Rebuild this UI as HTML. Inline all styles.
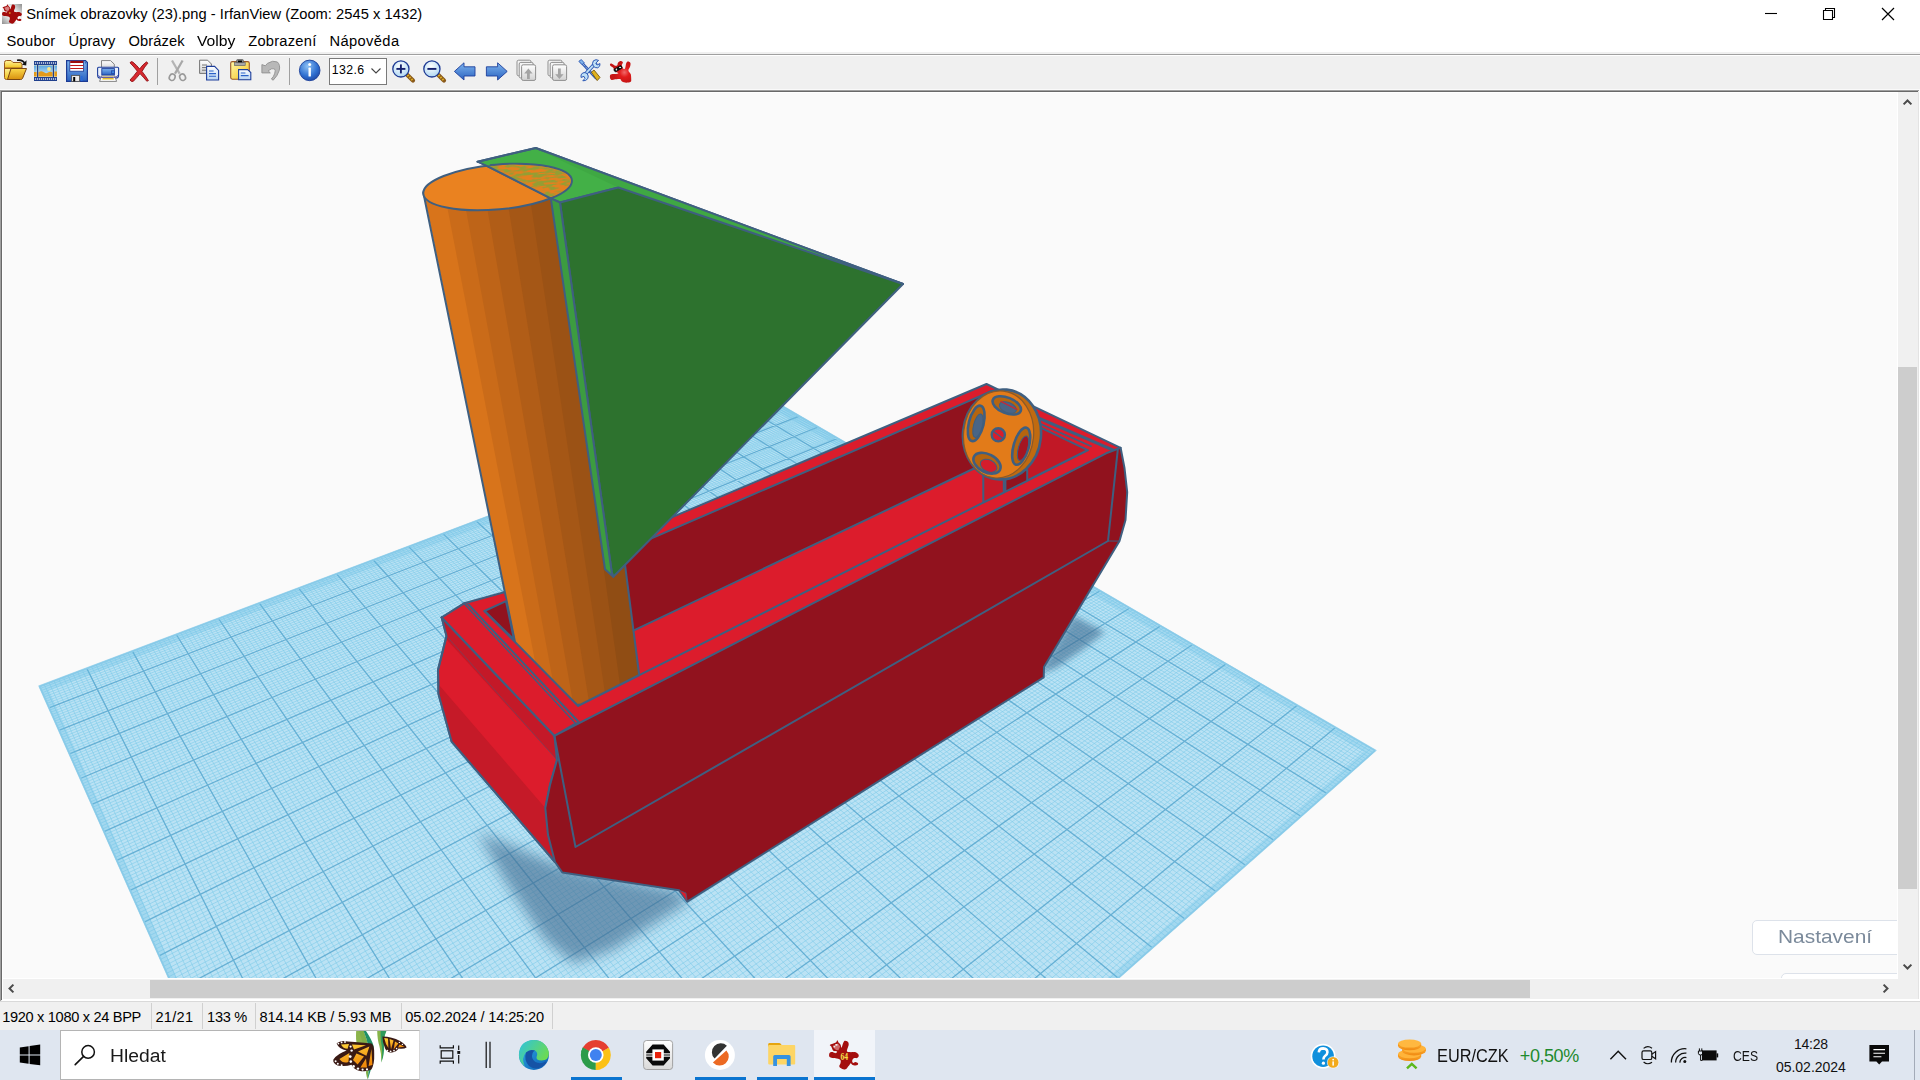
<!DOCTYPE html>
<html lang="cs"><head><meta charset="utf-8"><title>IrfanView</title>
<style>
*{box-sizing:border-box;margin:0;padding:0}
html,body{width:1920px;height:1080px;overflow:hidden;background:#fff}
body{position:relative;font-family:"Liberation Sans",sans-serif;color:#000}
.abs{position:absolute}
.t{position:absolute;white-space:nowrap;line-height:1;transform-origin:0 0}
#titlebar{left:0;top:0;width:1920px;height:31px;background:#fff}
#menubar{left:0;top:31px;width:1920px;height:22px;background:#fff}
#toolbar{left:0;top:52px;width:1920px;height:40px;background:#f0f0f0}
#view{left:0;top:90px;width:1920px;height:911px;background:#f0f0f0}
#canvas{left:3px;top:93px;width:1894px;height:885px;background:#fafafa;overflow:hidden}
#status{left:0;top:1002px;width:1920px;height:28px;background:#f0f0f0}
#taskbar{left:0;top:1030px;width:1920px;height:50px;background:#dfe6f0}
.sep{position:absolute;top:1003px;width:1px;height:26px;background:#d0d0d0}
.ul{position:absolute;top:1077px;height:3px;background:#0a74d0}
</style></head><body>

<div id="titlebar" class="abs">
<svg class="abs" style="left:2px;top:4px" width="20" height="20" viewBox="0 0 20 20">
<defs><linearGradient id="tig" x1="1" y1="0" x2="0" y2="1"><stop offset="0" stop-color="#8e8e8e"/><stop offset="0.42" stop-color="#ffffff"/><stop offset="0.58" stop-color="#ffffff"/><stop offset="1" stop-color="#8e8e8e"/></linearGradient></defs>
<rect x="0" y="0" width="20" height="20" fill="url(#tig)"/>
<g transform="scale(0.667) translate(-829,-1040)"><path d="M830.0 1044.7C830.8 1044.1 834.7 1043.3 835.9 1042.5C837.1 1041.8 836.8 1040.3 837.2 1040.3C837.7 1040.3 838.0 1041.8 838.5 1042.5C839.1 1043.3 840.1 1043.9 840.6 1044.7C841.0 1045.6 841.1 1047.9 841.5 1047.7C841.9 1047.5 842.5 1044.7 843.0 1043.6C843.4 1042.5 843.6 1041.7 844.1 1041.2C844.6 1040.8 845.2 1040.7 845.9 1040.9C846.6 1041.0 847.7 1041.3 848.1 1042.0C848.6 1042.6 848.8 1043.6 848.7 1044.7C848.6 1045.9 847.7 1047.7 847.4 1048.8C847.1 1049.9 846.7 1050.9 847.0 1051.4C847.4 1052.0 848.6 1052.0 849.6 1052.1C850.7 1052.3 852.3 1052.1 853.3 1052.1C854.3 1052.2 854.8 1052.0 855.6 1052.3C856.4 1052.6 857.6 1053.4 858.1 1054.0C858.7 1054.6 858.9 1055.5 858.7 1056.2C858.5 1056.9 857.7 1057.8 857.0 1058.1C856.3 1058.4 855.2 1057.8 854.4 1058.1C853.7 1058.3 853.0 1059.0 852.6 1059.6C852.2 1060.1 852.1 1060.9 852.2 1061.4C852.3 1062.0 852.8 1062.8 853.3 1062.9C853.8 1063.0 854.6 1062.2 855.2 1062.1C855.8 1062.1 856.5 1062.3 857.0 1062.5C857.5 1062.8 858.1 1063.2 858.1 1063.6C858.2 1064.1 858.0 1064.8 857.4 1065.1C856.9 1065.4 855.7 1065.5 854.8 1065.5C854.0 1065.4 852.9 1065.1 852.2 1064.7C851.5 1064.4 851.2 1063.3 850.7 1063.3C850.3 1063.3 850.1 1064.2 849.6 1064.7C849.2 1065.3 848.6 1066.0 848.1 1066.6C847.7 1067.2 847.3 1068.0 846.7 1068.4C846.0 1068.9 845.1 1069.6 844.1 1069.6C843.1 1069.5 841.5 1068.6 840.7 1068.1C839.9 1067.5 839.3 1067.0 839.3 1066.2C839.2 1065.5 840.1 1064.6 840.4 1063.6C840.6 1062.7 840.9 1061.4 840.7 1060.7C840.6 1059.9 839.9 1059.6 839.3 1059.2C838.6 1058.8 837.8 1058.6 836.7 1058.4C835.5 1058.3 833.4 1058.3 832.2 1058.1C831.0 1057.8 830.2 1057.5 829.6 1057.0C829.1 1056.4 829.0 1055.5 829.1 1054.7C829.1 1054.0 829.4 1053.0 830.0 1052.5C830.6 1052.1 831.6 1052.1 832.6 1052.1C833.6 1052.2 835.2 1053.0 835.9 1052.9C836.7 1052.8 837.5 1051.8 837.0 1051.4C836.6 1051.0 834.2 1051.2 833.3 1050.7C832.5 1050.1 832.2 1048.8 831.9 1048.1C831.5 1047.3 831.4 1046.8 831.1 1046.2C830.8 1045.7 829.2 1045.4 830.0 1044.7Z" fill="#a30b0b"/><path d="M832.6 1045.6L838 1043.4L840.4 1046.6L838.4 1050.4Q834 1050.4 832.6 1045.6Z" fill="#d98080"/><rect x="839.4" y="1052.6" width="2.4" height="1.8" fill="#f2c030"/></g></svg>
<div class="t" style="left:26.2px;top:7.4px;font-size:14.7px;color:#000;letter-spacing:0.036px;">Snímek obrazovky (23).png - IrfanView (Zoom: 2545 x 1432)</div>
<svg class="abs" style="left:1740px;top:0" width="180" height="31" viewBox="1740 0 180 31" fill="none" stroke="#000" stroke-width="1.1">
<path d="M1765 13.5H1777"/>
<path d="M1823.5 10.5h9v9h-9z M1825.5 10.5v-2h9v9h-2"/>
<path d="M1882 8L1894 20M1894 8L1882 20" stroke-width="1.2"/></svg>
</div>
<div id="menubar" class="abs">
<div class="t" style="left:6.5px;top:2.9px;font-size:14.7px;color:#000;letter-spacing:0.280px;">Soubor</div>
<div class="t" style="left:68.5px;top:2.9px;font-size:14.7px;color:#000;letter-spacing:0.068px;">Úpravy</div>
<div class="t" style="left:128.6px;top:2.9px;font-size:14.7px;color:#000;letter-spacing:0.091px;">Obrázek</div>
<div class="t" style="left:197.2px;top:2.9px;font-size:14.7px;color:#000;transform:scaleX(1.0706);">Volby</div>
<div class="t" style="left:248.2px;top:2.9px;font-size:14.7px;color:#000;letter-spacing:0.239px;">Zobrazení</div>
<div class="t" style="left:329.5px;top:2.9px;font-size:14.7px;color:#000;letter-spacing:0.369px;">Nápověda</div>
</div>
<div id="toolbar" class="abs">
<div class="abs" style="left:0;top:2px;width:1920px;height:1px;background:#a0a0a0"></div>
<div class="abs" style="left:0;top:3px;width:1920px;height:1px;background:#fff"></div>
<div class="abs" style="left:157px;top:6px;width:1px;height:27px;background:#a0a0a0"></div>
<div class="abs" style="left:289px;top:6px;width:1px;height:27px;background:#a0a0a0"></div>
<svg class="abs" style="left:0;top:0" width="700" height="40" viewBox="0 52 700 40">
<defs>
<linearGradient id="gfold" x1="0" y1="0" x2="0" y2="1"><stop offset="0" stop-color="#fff6a0"/><stop offset="1" stop-color="#f2c21c"/></linearGradient>
<linearGradient id="gfold2" x1="0" y1="0" x2="0" y2="1"><stop offset="0" stop-color="#fbd84a"/><stop offset="1" stop-color="#d8900e"/></linearGradient>
<linearGradient id="gblue" x1="0" y1="0" x2="0" y2="1"><stop offset="0" stop-color="#7db4ee"/><stop offset="1" stop-color="#2a62c0"/></linearGradient>
<linearGradient id="gsky" x1="0" y1="0" x2="0" y2="1"><stop offset="0" stop-color="#5aa6e0"/><stop offset="1" stop-color="#cfeaf8"/></linearGradient>
<radialGradient id="ginfo" cx="0.4" cy="0.3" r="0.8"><stop offset="0" stop-color="#8cc0f4"/><stop offset="0.6" stop-color="#2f6fd0"/><stop offset="1" stop-color="#1b3f9a"/></radialGradient>
<radialGradient id="glens" cx="0.45" cy="0.35" r="0.7"><stop offset="0" stop-color="#ffffff"/><stop offset="1" stop-color="#a9d4f2"/></radialGradient>
<linearGradient id="gpaper" x1="0" y1="0" x2="0" y2="1"><stop offset="0" stop-color="#ffffff"/><stop offset="1" stop-color="#d2d2d2"/></linearGradient>
<linearGradient id="gclip" x1="0" y1="0" x2="1" y2="1"><stop offset="0" stop-color="#fff9a8"/><stop offset="1" stop-color="#f5c022"/></linearGradient>
<linearGradient id="gpage" x1="0" y1="0" x2="0" y2="1"><stop offset="0" stop-color="#ffffff"/><stop offset="1" stop-color="#b8d4f2"/></linearGradient>
</defs>
<g transform="translate(3,59)">
<path d="M1.5 3.5Q1.5 1.5 3.5 1.5H8L10 3.5H17Q19 3.5 19 5.5V9H1.5Z" fill="url(#gfold)" stroke="#9a5a1c" stroke-width="1"/>
<path d="M1.5 8V18.5Q1.5 20.5 3.5 20.5H6L9 9.5H1.5Z" fill="url(#gfold)" stroke="#9a5a1c" stroke-width="1"/>
<path d="M8 9.5H23.5L19.5 19.5Q19 20.5 17.5 20.5H4.5Z" fill="url(#gfold2)" stroke="#7a4612" stroke-width="1"/>
<path d="M14 1.2Q20 0.5 21.5 4.2" fill="none" stroke="#111" stroke-width="1.6"/><path d="M19 5.8L23.6 1.2L23.2 6.6Z" fill="#111"/></g>
<g transform="translate(34,61)">
<rect x="0" y="0" width="23" height="20" fill="#1f3f8c"/>
<rect x="0" y="4" width="23" height="12" fill="#f5e6b8"/>
<rect x="0" y="4.5" width="2.6" height="11" fill="url(#gsky)"/><rect x="0" y="11" width="2.6" height="4.5" fill="#e39a1a"/>
<rect x="4.4" y="4.5" width="14.2" height="11" fill="url(#gsky)"/>
<path d="M4.4 11.5Q7 9.5 9.5 11Q12 13 14 11.5Q16.5 10 18.6 11.5V15.5H4.4Z" fill="#e39a1a"/><circle cx="15" cy="8" r="1.9" fill="#fbe88a"/>
<rect x="20.4" y="4.5" width="2.6" height="11" fill="url(#gsky)"/><rect x="20.4" y="10.5" width="2.6" height="5" fill="#e39a1a"/>
<rect x="3" y="4" width="1.2" height="12" fill="#1f3f8c"/><rect x="18.8" y="4" width="1.2" height="12" fill="#1f3f8c"/>
<g fill="#fff"><circle cx="1.5" cy="2" r="0.7"/><circle cx="3.5" cy="2" r="0.7"/><circle cx="5.5" cy="2" r="0.7"/><circle cx="7.5" cy="2" r="0.7"/><circle cx="9.5" cy="2" r="0.7"/><circle cx="11.5" cy="2" r="0.7"/><circle cx="13.5" cy="2" r="0.7"/><circle cx="15.5" cy="2" r="0.7"/><circle cx="17.5" cy="2" r="0.7"/><circle cx="19.5" cy="2" r="0.7"/><circle cx="21.5" cy="2" r="0.7"/>
<circle cx="1.5" cy="18" r="0.7"/><circle cx="3.5" cy="18" r="0.7"/><circle cx="5.5" cy="18" r="0.7"/><circle cx="7.5" cy="18" r="0.7"/><circle cx="9.5" cy="18" r="0.7"/><circle cx="11.5" cy="18" r="0.7"/><circle cx="13.5" cy="18" r="0.7"/><circle cx="15.5" cy="18" r="0.7"/><circle cx="17.5" cy="18" r="0.7"/><circle cx="19.5" cy="18" r="0.7"/><circle cx="21.5" cy="18" r="0.7"/></g></g>
<g transform="translate(66,60)">
<path d="M0.6 0.6H19.5L21.4 2.5V21.4H0.6Z" fill="url(#gblue)" stroke="#1b3a94" stroke-width="1.2"/>
<rect x="3.8" y="0.6" width="13.8" height="10.6" fill="#fff" stroke="#1b3a94" stroke-width="0.8"/>
<rect x="4.2" y="0.8" width="13" height="2.2" fill="#9c0c0c"/><rect x="4.2" y="5" width="13" height="1" fill="#c01818"/><rect x="4.2" y="8" width="13" height="1" fill="#c01818"/>
<rect x="5.6" y="15.4" width="8" height="6" fill="#ececec" stroke="#555" stroke-width="0.9"/><rect x="7.2" y="17" width="2" height="4.4" fill="#000"/>
<rect x="14.8" y="16" width="1.8" height="5" fill="#2a6ad8"/><circle cx="19.4" cy="2.8" r="0.6" fill="#1b3a94"/></g>
<g transform="translate(97,60)">
<path d="M4.5 0.6H13.5L17.3 4.2V9H4.5Z" fill="url(#gpaper)" stroke="#777" stroke-width="0.9"/>
<path d="M0.6 8.2Q0.6 7.2 1.6 7.2H20.6Q21.6 7.2 21.6 8.2V15.2Q21.6 18.2 18.6 18.2H3.6Q0.6 18.2 0.6 15.2Z" fill="#eaf1fb" stroke="#1e3f9c" stroke-width="1.1"/>
<rect x="4.8" y="8.6" width="12.6" height="6.4" fill="url(#gblue)" stroke="#1e3f9c" stroke-width="0.9"/>
<rect x="14.6" y="10.8" width="2.8" height="2.8" fill="#3d86e0" stroke="#1e3f9c" stroke-width="0.7"/>
<path d="M4.4 16H17.8L19.6 21.4H2.6Z" fill="#fff" stroke="#777" stroke-width="0.9"/>
<path d="M6.2 16.8H16L17 19.6H5.2Z" fill="#f2c81e"/>
<path d="M1.4 15.4Q3 17.6 6 17.6H16.4Q19.4 17.6 21 15.4" fill="none" stroke="#5a54b0" stroke-width="1"/></g>
<g transform="translate(128,60)">
<path d="M2 2.8Q3.4 0.8 5 2.2Q9 5.4 11.6 9Q14.6 4.6 18.6 1.8L19.8 3.2Q16.4 7 14 11.4Q17.4 15.6 20.4 20.6L18.8 21.2Q15.2 17 12 13.6Q9 17.6 5.2 21.4Q3 22 2 20Q6.4 15.4 9.4 11.2Q6.2 7 2 2.8Z" fill="#d8282e" stroke="#8e1014" stroke-width="0.9" stroke-linejoin="round"/></g>
<g transform="translate(167,59)" fill="none" stroke="#9a9a9a">
<path d="M5 1.5L12.6 14.6" stroke-width="2.2" stroke="#b4b4b4"/><path d="M15.6 1.5L8 14.6" stroke-width="2.2" stroke="#a8a8a8"/>
<ellipse cx="5.2" cy="18.2" rx="2.8" ry="3.3" stroke-width="1.6" transform="rotate(28 5.2 18.2)"/>
<ellipse cx="15.6" cy="18.2" rx="2.8" ry="3.3" stroke-width="1.6" transform="rotate(-28 15.6 18.2)"/></g>
<g transform="translate(199,59)">
<path d="M0.6 1.2H8.6L12.4 5V14.4H0.6Z" fill="url(#gpaper)" stroke="#666" stroke-width="0.9"/>
<path d="M3 6H8M3 8.6H8M3 11.2H7" stroke="#666" stroke-width="0.9"/>
<path d="M7.6 7.4H15.6L19.6 11.4V21H7.6Z" fill="url(#gpage)" stroke="#1e3f9c" stroke-width="1.1"/>
<path d="M10 12H14.6M10 14.6H17M10 17.2H17" stroke="#2a62c8" stroke-width="1.1"/></g>
<g transform="translate(230,59)">
<rect x="0.7" y="2.6" width="18.6" height="17.6" rx="1.6" fill="url(#gclip)" stroke="#9a5a2a" stroke-width="1.1"/>
<rect x="4.6" y="3.6" width="10.6" height="3" fill="#a8a8a8" stroke="#666" stroke-width="0.7"/>
<path d="M6.6 3.6V1.4Q6.6 0.6 7.6 0.6H12.4Q13.4 0.6 13.4 1.4V3.6Z" fill="#8a8a8a" stroke="#555" stroke-width="0.7"/><rect x="8" y="1.6" width="4" height="1.6" fill="#000"/>
<path d="M8.6 10.6H17.6L20.8 13.6V20.8H8.6Z" fill="url(#gpage)" stroke="#1e3f9c" stroke-width="1.1"/>
<path d="M10.8 14H15.4M10.8 16.6H18.6" stroke="#2a62c8" stroke-width="1.1"/></g>
<g transform="translate(261,59)">
<path d="M0.9 5.6L0.9 13.9L9.3 13.9L7.2 11.8Q10.8 8.8 13.4 9.8Q15 11.2 13.6 14.8Q12.6 17.8 10.4 20L12.2 21.2Q16.6 16.8 18.2 11.6Q19.6 6 16.4 3Q12 0.8 6.4 4.4L4.4 6.8Z" fill="#b8b8b8" stroke="#909090" stroke-width="0.9" stroke-linejoin="round"/></g>
<g transform="translate(299,59)">
<circle cx="10.7" cy="11.4" r="10.3" fill="url(#ginfo)" stroke="#1b3f9a" stroke-width="0.9"/>
<circle cx="10.7" cy="5.6" r="1.5" fill="#fff"/><rect x="9.5" y="8.6" width="2.4" height="9" rx="0.6" fill="#fff"/></g>
<g transform="translate(392,59)">
<path d="M14.6 15.2L21 21.6" stroke="#8a5a1c" stroke-width="4.2" stroke-linecap="round"/><path d="M15.4 16L20.6 21.2" stroke="#e0b020" stroke-width="2" stroke-dasharray="1.6 1.2"/>
<circle cx="8.9" cy="9.9" r="8.1" fill="url(#glens)" stroke="#1e3a94" stroke-width="1.3"/><path d="M4.4 9.9H13.4" stroke="#14206e" stroke-width="1.9"/><path d="M8.9 5.4V14.4" stroke="#14206e" stroke-width="1.9"/></g>
<g transform="translate(423,59)">
<path d="M14.6 15.2L21 21.6" stroke="#8a5a1c" stroke-width="4.2" stroke-linecap="round"/><path d="M15.4 16L20.6 21.2" stroke="#e0b020" stroke-width="2" stroke-dasharray="1.6 1.2"/>
<circle cx="8.9" cy="9.9" r="8.1" fill="url(#glens)" stroke="#1e3a94" stroke-width="1.3"/><path d="M4.4 9.9H13.4" stroke="#14206e" stroke-width="1.9"/></g>
<g transform="translate(454,59)"><path d="M0.4 12.4L10 3.8V7.8H21V17H10V21Z" fill="url(#gblue)" stroke="#1e3f9c" stroke-width="0.9" stroke-linejoin="round"/></g>
<g transform="translate(485,59)"><path d="M22.2 12.4L12.6 3.8V7.8H1.4V17H12.6V21Z" fill="url(#gblue)" stroke="#1e3f9c" stroke-width="0.9" stroke-linejoin="round"/></g>
<g transform="translate(516,59)">
<rect x="1" y="1.2" width="14" height="15.6" rx="1.6" fill="#f4f4f4" stroke="#8e8e8e" stroke-width="1"/>
<rect x="3.2" y="3.4" width="14" height="15.6" rx="1.6" fill="#f4f4f4" stroke="#8e8e8e" stroke-width="1"/>
<rect x="5.6" y="5.8" width="14" height="15.6" rx="1.6" fill="url(#gpaper)" stroke="#8e8e8e" stroke-width="1"/>
<path d="M12.4 9.6L16.6 14.4H13.8V20H11V14.4H8.2Z" fill="#a4a4a4"/></g>
<g transform="translate(547,59)">
<rect x="1" y="1.2" width="14" height="15.6" rx="1.6" fill="#f4f4f4" stroke="#8e8e8e" stroke-width="1"/>
<rect x="3.2" y="3.4" width="14" height="15.6" rx="1.6" fill="#f4f4f4" stroke="#8e8e8e" stroke-width="1"/>
<rect x="5.6" y="5.8" width="14" height="15.6" rx="1.6" fill="url(#gpaper)" stroke="#8e8e8e" stroke-width="1"/>
<path d="M12.4 20L16.6 15.2H13.8V9.6H11V15.2H8.2Z" fill="#a4a4a4"/></g>
<g transform="translate(578,59)">
<path d="M2.2 2L18.4 19.6" stroke="#2c58b4" stroke-width="2.6"/><path d="M2.2 2L18.4 19.6" stroke="#dbeaf8" stroke-width="1" stroke-dasharray="1 1"/>
<path d="M0.8 2.2L3.4 0.6L6.4 4L4 5.6Z" fill="#7fb2ea" stroke="#2c58b4" stroke-width="0.8"/>
<path d="M13.4 13.2L16 11L22 18.4L19.2 21.6Z" fill="#e0b21e" stroke="#7a5a10" stroke-width="0.9"/>
<path d="M18.2 3.2L7 15.4" stroke="#2c58b4" stroke-width="3.6"/><path d="M18.2 3.2L7 15.4" stroke="#bfe0f6" stroke-width="1.8"/>
<path d="M15.4 1.8Q18 -0.2 20.6 1.4L17.8 4L19 6L22 4.6Q22.4 7.6 19.8 8.8Q17 9.2 15.2 7Q13.8 4.4 15.4 1.8Z" fill="#bfe0f6" stroke="#2c58b4" stroke-width="1"/>
<path d="M9.2 14.6Q11 17 9.8 19.6Q8 22.2 4.8 21.8L7 19.4L6 17.4L3 18.4Q2.4 15.6 4.6 14Q7 12.8 9.2 14.6Z" fill="#bfe0f6" stroke="#2c58b4" stroke-width="1"/></g>
<g transform="translate(609,59)">
<defs><radialGradient id="gcat" cx="0.68" cy="0.52" r="0.5"><stop offset="0" stop-color="#f06a6a"/><stop offset="0.45" stop-color="#e21c1c"/><stop offset="1" stop-color="#c41414"/></radialGradient></defs>
<path d="M1.0 5.3C1.2 5.0 1.6 4.3 2.5 4.5C3.4 4.7 5.1 6.4 6.1 6.7C7.1 7.0 7.9 6.6 8.3 6.2C8.8 5.7 8.4 4.6 8.9 3.9C9.4 3.3 10.6 2.2 11.4 2.1C12.2 2.0 13.7 2.7 13.9 3.4C14.1 4.1 12.7 5.1 12.8 6.2C12.9 7.2 13.9 9.3 14.4 9.8C15.0 10.3 15.6 10.1 16.1 9.2C16.6 8.3 16.8 5.3 17.2 4.2C17.7 3.1 18.2 2.6 18.9 2.6C19.6 2.5 21.0 3.1 21.4 3.9C21.8 4.8 21.4 6.3 21.1 7.6C20.8 8.8 19.4 10.2 19.4 11.4C19.5 12.7 21.2 13.7 21.7 15.1C22.1 16.4 22.2 18.5 22.2 19.8C22.2 21.1 22.5 22.2 21.7 22.8C20.8 23.5 18.7 23.7 17.2 23.7C15.8 23.6 14.1 23.2 13.1 22.6C12.0 22.0 12.3 20.4 11.1 20.1C10.0 19.7 7.5 20.2 6.1 20.3C4.7 20.5 3.4 21.2 2.5 20.9C1.6 20.6 1.1 19.5 1.0 18.7C0.8 17.8 0.8 16.2 1.7 15.6C2.5 15.0 4.8 15.3 6.1 15.1C7.4 14.8 9.4 14.6 9.4 14.2C9.5 13.9 7.4 13.4 6.7 12.8C5.9 12.3 5.4 11.6 5.0 10.9C4.6 10.2 4.8 9.4 4.2 8.7C3.6 8.0 1.9 7.3 1.4 6.7C0.9 6.2 0.8 5.7 1.0 5.3Z" fill="url(#gcat)"/>
<path d="M5 10.3L11.7 6.4L13.1 8.1L12.8 9.2L6.7 12.8L5.3 12Z" fill="#0c0c0c" stroke="#0c0c0c" stroke-width="0.8" stroke-linejoin="round"/>
<ellipse cx="7.4" cy="10.6" rx="0.8" ry="1" fill="#e8e8e8"/><ellipse cx="11.1" cy="8.4" rx="1.1" ry="0.7" fill="#e8e8e8"/></g>
</svg>
<div class="abs" style="left:329px;top:6px;width:58px;height:27px;background:#fff;border:1px solid #7a7a7a"></div>
<div class="t" style="left:331.7px;top:11.6px;font-size:12.3px;color:#000;letter-spacing:0.405px;">132.6</div>
<svg class="abs" style="left:370px;top:14px" width="12" height="10" viewBox="0 0 12 10"><path d="M1.5 2.5L6 7L10.5 2.5" fill="none" stroke="#444" stroke-width="1.1"/></svg>
</div>
<div id="view" class="abs"></div>
<div class="abs" style="left:0;top:89px;width:1920px;height:1px;background:#fafafa"></div>
<div class="abs" style="left:0;top:90px;width:1919px;height:1px;background:#a0a0a0"></div>
<div class="abs" style="left:1px;top:91px;width:1917px;height:1px;background:#696969"></div>
<div class="abs" style="left:2px;top:92px;width:1896px;height:1px;background:#fff"></div>
<div class="abs" style="left:0;top:90px;width:1px;height:911px;background:#a0a0a0"></div>
<div class="abs" style="left:1px;top:91px;width:1px;height:909px;background:#696969"></div>
<div class="abs" style="left:2px;top:92px;width:1px;height:907px;background:#fff"></div>
<div class="abs" style="left:1897px;top:92px;width:1px;height:887px;background:#fff"></div>
<div class="abs" style="left:1918px;top:92px;width:1px;height:908px;background:#e3e3e3"></div>
<div class="abs" style="left:1919px;top:90px;width:1px;height:911px;background:#fff"></div>
<div class="abs" style="left:2px;top:978px;width:1896px;height:1px;background:#fff"></div>
<div class="abs" style="left:2px;top:999px;width:1917px;height:2px;background:#fff"></div>
<div class="abs" style="left:0;top:1001px;width:1920px;height:1px;background:#d9d9d9"></div>
<div id="canvas" class="abs">
<svg class="abs" style="left:0;top:0" width="1894" height="885" viewBox="3 93 1894 885">
<defs>
<filter id="blur7" x="-20%" y="-20%" width="140%" height="140%"><feGaussianBlur stdDeviation="7"/></filter>
<filter id="blur4" x="-30%" y="-30%" width="160%" height="160%"><feGaussianBlur stdDeviation="3"/></filter>
<filter id="zf" x="0" y="0" width="100%" height="100%" color-interpolation-filters="sRGB"><feTurbulence type="fractalNoise" baseFrequency="0.09 0.42" numOctaves="2" seed="7" result="n"/><feColorMatrix in="n" type="matrix" values="0 0 0 0 0.58  0 0 0 0 0.62  0 0 0 0 0.2  0 0 0 7 -3.1" result="c"/><feComposite in="c" in2="SourceGraphic" operator="in"/></filter>
</defs>
<polygon points="39.5,686.3 781.3,405.6 1375.2,750.5 436.7,1581.2" fill="#bbe2f4"/>
<path d="M44.3 684.5L444.5 1574.3M40.4 688.4L783.0 406.6M49.1 682.7L452.2 1567.4M41.4 690.5L784.8 407.7M53.9 680.9L459.9 1560.7M42.3 692.7L786.6 408.7M58.7 679.1L467.5 1553.9M43.3 694.8L788.5 409.8M63.4 677.3L475.1 1547.2M44.2 696.9L790.3 410.8M68.1 675.5L482.6 1540.6M45.2 699.1L792.1 411.9M72.8 673.7L490.1 1534.0M46.1 701.3L793.9 413.0M77.5 671.9L497.5 1527.4M47.1 703.4L795.7 414.0M82.2 670.1L504.8 1520.9M48.1 705.6L797.6 415.1M91.5 666.6L519.3 1508.0M50.0 710.0L801.3 417.2M96.1 664.9L526.5 1501.7M51.0 712.2L803.1 418.3M100.7 663.1L533.7 1495.4M52.0 714.5L805.0 419.4M105.3 661.4L540.8 1489.1M53.0 716.7L806.8 420.5M109.8 659.7L547.8 1482.9M54.0 718.9L808.7 421.6M114.4 658.0L554.8 1476.7M55.0 721.2L810.6 422.6M118.9 656.2L561.7 1470.6M56.0 723.4L812.5 423.7M123.4 654.5L568.6 1464.5M57.0 725.7L814.4 424.8M127.9 652.8L575.4 1458.4M58.0 728.0L816.3 425.9M136.9 649.5L588.9 1446.5M60.1 732.6L820.1 428.1M141.3 647.8L595.6 1440.5M61.1 734.9L822.0 429.3M145.7 646.1L602.3 1434.6M62.1 737.3L823.9 430.4M150.1 644.4L608.9 1428.8M63.2 739.6L825.8 431.5M154.5 642.8L615.4 1423.0M64.2 741.9L827.8 432.6M158.9 641.1L621.9 1417.2M65.2 744.3L829.7 433.7M163.3 639.5L628.4 1411.5M66.3 746.7L831.6 434.9M167.6 637.8L634.8 1405.8M67.4 749.1L833.6 436.0M171.9 636.2L641.2 1400.2M68.4 751.5L835.6 437.1M180.6 632.9L653.8 1389.0M70.6 756.3L839.5 439.4M184.8 631.3L660.0 1383.5M71.6 758.7L841.5 440.6M189.1 629.7L666.2 1378.0M72.7 761.1L843.4 441.7M193.4 628.1L672.4 1372.6M73.8 763.6L845.4 442.9M197.6 626.5L678.5 1367.1M74.9 766.1L847.4 444.0M201.8 624.9L684.6 1361.8M76.0 768.5L849.4 445.2M206.0 623.3L690.6 1356.4M77.1 771.0L851.4 446.4M210.2 621.7L696.6 1351.1M78.2 773.5L853.4 447.5M214.4 620.1L702.6 1345.8M79.3 776.0L855.5 448.7M222.7 617.0L714.4 1335.4M81.6 781.1L859.5 451.1M226.8 615.4L720.2 1330.2M82.7 783.6L861.6 452.2M230.9 613.9L726.0 1325.1M83.8 786.2L863.6 453.4M235.0 612.3L731.8 1320.0M85.0 788.8L865.7 454.6M239.1 610.8L737.5 1314.9M86.1 791.3L867.7 455.8M243.2 609.2L743.2 1309.9M87.3 793.9L869.8 457.0M247.2 607.7L748.9 1304.9M88.4 796.5L871.9 458.2M251.3 606.2L754.5 1299.9M89.6 799.2L874.0 459.4M255.3 604.6L760.1 1295.0M90.8 801.8L876.0 460.6M263.3 601.6L771.2 1285.2M93.1 807.1L880.2 463.1M267.3 600.1L776.6 1280.3M94.3 809.8L882.4 464.3M271.2 598.6L782.1 1275.5M95.5 812.5L884.5 465.5M275.2 597.1L787.5 1270.7M96.7 815.2L886.6 466.8M279.1 595.6L792.9 1266.0M97.9 817.9L888.7 468.0M283.1 594.1L798.2 1261.2M99.1 820.6L890.9 469.2M287.0 592.7L803.5 1256.5M100.3 823.4L893.0 470.5M290.9 591.2L808.8 1251.9M101.6 826.1L895.2 471.7M294.7 589.7L814.0 1247.2M102.8 828.9L897.3 473.0M302.5 586.8L824.4 1238.0M105.3 834.5L901.7 475.5M306.3 585.3L829.6 1233.5M106.5 837.3L903.8 476.8M310.1 583.9L834.7 1228.9M107.8 840.1L906.0 478.1M314.0 582.4L839.7 1224.4M109.0 842.9L908.2 479.3M317.8 581.0L844.8 1220.0M110.3 845.8L910.4 480.6M321.6 579.6L849.8 1215.5M111.6 848.7L912.6 481.9M325.3 578.1L854.8 1211.1M112.8 851.5L914.9 483.2M329.1 576.7L859.8 1206.7M114.1 854.4L917.1 484.5M332.9 575.3L864.7 1202.4M115.4 857.4L919.3 485.8M340.3 572.5L874.5 1193.7M118.0 863.2L923.8 488.4M344.0 571.1L879.3 1189.4M119.3 866.2L926.1 489.7M347.7 569.7L884.1 1185.2M120.7 869.2L928.3 491.0M351.4 568.3L888.9 1180.9M122.0 872.2L930.6 492.3M355.1 566.9L893.7 1176.7M123.3 875.2L932.9 493.6M358.7 565.5L898.4 1172.5M124.7 878.2L935.2 495.0M362.4 564.1L903.1 1168.4M126.0 881.2L937.5 496.3M366.0 562.7L907.8 1164.2M127.4 884.3L939.8 497.6M369.7 561.4L912.4 1160.1M128.7 887.3L942.1 499.0M376.9 558.6L921.6 1152.0M131.5 893.5L946.7 501.7M380.5 557.3L926.2 1147.9M132.9 896.7L949.1 503.0M384.0 555.9L930.7 1143.9M134.3 899.8L951.4 504.4M387.6 554.6L935.3 1139.9M135.7 902.9L953.8 505.8M391.2 553.2L939.7 1135.9M137.1 906.1L956.1 507.1M394.7 551.9L944.2 1132.0M138.5 909.3L958.5 508.5M398.2 550.6L948.6 1128.1M139.9 912.5L960.9 509.9M401.7 549.2L953.1 1124.2M141.3 915.7L963.3 511.3M405.2 547.9L957.4 1120.3M142.8 919.0L965.7 512.7M412.2 545.3L966.1 1112.6M145.7 925.5L970.5 515.5M415.7 543.9L970.5 1108.8M147.1 928.8L972.9 516.9M419.1 542.6L974.7 1105.0M148.6 932.1L975.3 518.3M422.6 541.3L979.0 1101.2M150.1 935.4L977.8 519.7M426.0 540.0L983.2 1097.4M151.6 938.8L980.2 521.1M429.4 538.7L987.5 1093.7M153.1 942.2L982.7 522.6M432.9 537.4L991.7 1090.0M154.6 945.5L985.1 524.0M436.3 536.2L995.8 1086.3M156.1 948.9L987.6 525.4M439.6 534.9L1000.0 1082.6M157.6 952.4L990.1 526.9M446.4 532.3L1008.2 1075.3M160.7 959.3L995.1 529.8M449.8 531.0L1012.3 1071.7M162.2 962.8L997.6 531.2M453.1 529.8L1016.3 1068.1M163.8 966.3L1000.1 532.7M456.4 528.5L1020.4 1064.6M165.3 969.8L1002.6 534.2M459.8 527.3L1024.4 1061.0M166.9 973.3L1005.2 535.6M463.1 526.0L1028.4 1057.5M168.5 976.9L1007.7 537.1M466.4 524.8L1032.4 1054.0M170.1 980.5L1010.3 538.6M469.7 523.5L1036.3 1050.5M171.7 984.1L1012.8 540.1M472.9 522.3L1040.2 1047.0M173.3 987.7L1015.4 541.6M479.5 519.8L1048.0 1040.1M176.5 995.0L1020.6 544.6M482.7 518.6L1051.9 1036.7M178.2 998.7L1023.2 546.1M486.0 517.3L1055.7 1033.3M179.8 1002.4L1025.8 547.6M489.2 516.1L1059.6 1029.9M181.5 1006.1L1028.4 549.1M492.4 514.9L1063.4 1026.5M183.1 1009.9L1031.1 550.7M495.6 513.7L1067.1 1023.2M184.8 1013.7L1033.7 552.2M498.8 512.5L1070.9 1019.8M186.5 1017.5L1036.3 553.7M502.0 511.3L1074.6 1016.5M188.2 1021.3L1039.0 555.3M505.2 510.1L1078.4 1013.2M189.9 1025.1L1041.7 556.8M511.5 507.7L1085.8 1006.7M193.3 1032.9L1047.1 559.9M514.7 506.5L1089.4 1003.4M195.1 1036.8L1049.8 561.5M517.8 505.3L1093.1 1000.2M196.8 1040.7L1052.5 563.1M520.9 504.1L1096.7 997.0M198.6 1044.7L1055.2 564.7M524.0 502.9L1100.3 993.8M200.3 1048.7L1057.9 566.3M527.1 501.8L1103.9 990.6M202.1 1052.7L1060.7 567.9M530.2 500.6L1107.5 987.5M203.9 1056.7L1063.4 569.5M533.3 499.4L1111.0 984.3M205.7 1060.8L1066.2 571.1M536.4 498.3L1114.6 981.2M207.5 1064.8L1069.0 572.7M542.5 495.9L1121.6 975.0M211.2 1073.1L1074.5 575.9M545.6 494.8L1125.1 971.9M213.0 1077.2L1077.3 577.5M548.6 493.6L1128.5 968.8M214.9 1081.4L1080.2 579.2M551.7 492.5L1132.0 965.8M216.7 1085.6L1083.0 580.8M554.7 491.3L1135.4 962.7M218.6 1089.9L1085.8 582.5M557.7 490.2L1138.8 959.7M220.5 1094.1L1088.7 584.1M560.7 489.1L1142.2 956.7M222.4 1098.4L1091.5 585.8M563.7 487.9L1145.6 953.7M224.3 1102.7L1094.4 587.5M566.7 486.8L1149.0 950.7M226.3 1107.1L1097.3 589.1M572.6 484.6L1155.7 944.8M230.1 1115.8L1103.1 592.5M575.6 483.4L1159.0 941.9M232.1 1120.3L1106.0 594.2M578.5 482.3L1162.3 939.0M234.1 1124.7L1109.0 595.9M581.5 481.2L1165.5 936.1M236.1 1129.2L1111.9 597.6M584.4 480.1L1168.8 933.2M238.1 1133.7L1114.8 599.3M587.3 479.0L1172.1 930.3M240.1 1138.2L1117.8 601.0M590.2 477.9L1175.3 927.4M242.1 1142.8L1120.8 602.8M593.1 476.8L1178.5 924.6M244.2 1147.4L1123.8 604.5M596.0 475.7L1181.7 921.8M246.2 1152.0L1126.8 606.2M601.8 473.5L1188.1 916.1M250.4 1161.4L1132.8 609.7M604.7 472.4L1191.2 913.3M252.5 1166.1L1135.8 611.5M607.5 471.3L1194.4 910.6M254.6 1170.9L1138.9 613.3M610.4 470.3L1197.5 907.8M256.7 1175.7L1141.9 615.1M613.2 469.2L1200.6 905.0M258.8 1180.5L1145.0 616.8M616.0 468.1L1203.7 902.3M261.0 1185.3L1148.1 618.6M618.9 467.1L1206.8 899.6M263.2 1190.2L1151.2 620.4M621.7 466.0L1209.8 896.9M265.3 1195.1L1154.3 622.2M624.5 464.9L1212.9 894.2M267.5 1200.1L1157.4 624.0M630.1 462.8L1219.0 888.8M272.0 1210.1L1163.7 627.7M632.9 461.8L1222.0 886.1M274.2 1215.1L1166.9 629.5M635.6 460.7L1225.0 883.5M276.5 1220.2L1170.1 631.4M638.4 459.7L1227.9 880.8M278.7 1225.3L1173.2 633.2M641.2 458.6L1230.9 878.2M281.0 1230.5L1176.4 635.1M643.9 457.6L1233.9 875.6M283.3 1235.6L1179.6 636.9M646.7 456.5L1236.8 873.0M285.6 1240.9L1182.9 638.8M649.4 455.5L1239.7 870.4M288.0 1246.1L1186.1 640.7M652.1 454.5L1242.6 867.8M290.3 1251.4L1189.4 642.6M657.5 452.4L1248.4 862.7M295.1 1262.1L1195.9 646.4M660.3 451.4L1251.3 860.2M297.5 1267.5L1199.2 648.3M662.9 450.4L1254.2 857.6M299.9 1273.0L1202.5 650.2M665.6 449.4L1257.0 855.1M302.3 1278.5L1205.8 652.2M668.3 448.3L1259.8 852.6M304.8 1284.0L1209.2 654.1M671.0 447.3L1262.7 850.1M307.3 1289.6L1212.5 656.0M673.6 446.3L1265.5 847.6M309.7 1295.2L1215.9 658.0M676.3 445.3L1268.3 845.2M312.3 1300.8L1219.3 659.9M678.9 444.3L1271.0 842.7M314.8 1306.5L1222.6 661.9M684.2 442.3L1276.6 837.8M319.9 1318.0L1229.5 665.9M686.8 441.3L1279.3 835.4M322.5 1323.8L1232.9 667.9M689.5 440.3L1282.0 833.0M325.1 1329.7L1236.4 669.9M692.1 439.3L1284.8 830.5M327.7 1335.6L1239.8 671.9M694.7 438.4L1287.5 828.1M330.3 1341.5L1243.3 673.9M697.3 437.4L1290.2 825.8M333.0 1347.5L1246.8 675.9M699.9 436.4L1292.9 823.4M335.6 1353.5L1250.3 678.0M702.4 435.4L1295.5 821.0M338.3 1359.6L1253.8 680.0M705.0 434.5L1298.2 818.7M341.1 1365.7L1257.4 682.1M710.1 432.5L1303.5 814.0M346.6 1378.1L1264.5 686.2M712.7 431.5L1306.1 811.7M349.3 1384.4L1268.1 688.3M715.2 430.6L1308.7 809.4M352.1 1390.7L1271.7 690.4M717.8 429.6L1311.3 807.0M354.9 1397.0L1275.3 692.5M720.3 428.7L1313.9 804.8M357.8 1403.4L1278.9 694.6M722.8 427.7L1316.5 802.5M360.7 1409.9L1282.6 696.7M725.3 426.8L1319.1 800.2M363.5 1416.4L1286.2 698.8M727.8 425.8L1321.6 797.9M366.5 1422.9L1289.9 701.0M730.3 424.9L1324.2 795.7M369.4 1429.5L1293.6 703.1M735.3 423.0L1329.2 791.2M375.3 1442.9L1301.1 707.4M737.8 422.0L1331.7 789.0M378.3 1449.7L1304.8 709.6M740.3 421.1L1334.2 786.8M381.3 1456.5L1308.6 711.8M742.7 420.2L1336.7 784.6M384.4 1463.4L1312.3 714.0M745.2 419.2L1339.2 782.4M387.5 1470.3L1316.1 716.2M747.6 418.3L1341.7 780.2M390.6 1477.3L1320.0 718.4M750.1 417.4L1344.1 778.0M393.7 1484.3L1323.8 720.6M752.5 416.5L1346.6 775.8M396.8 1491.4L1327.6 722.9M754.9 415.6L1349.0 773.7M400.0 1498.5L1331.5 725.1M759.8 413.7L1353.9 769.4M406.4 1513.0L1339.3 729.6M762.2 412.8L1356.3 767.2M409.7 1520.3L1343.2 731.9M764.6 411.9L1358.7 765.1M413.0 1527.7L1347.1 734.2M767.0 411.0L1361.1 763.0M416.3 1535.2L1351.1 736.5M769.4 410.1L1363.5 760.9M419.6 1542.7L1355.1 738.8M771.8 409.2L1365.8 758.8M423.0 1550.3L1359.1 741.1M774.2 408.3L1368.2 756.7M426.4 1557.9L1363.1 743.5M776.5 407.4L1370.5 754.6M429.8 1565.6L1367.1 745.8M778.9 406.5L1372.9 752.6M433.2 1573.4L1371.1 748.1" stroke="#7ecbea" stroke-width="1.0" stroke-opacity="0.6" fill="none"/>
<path d="M39.5 686.3L436.7 1581.2M39.5 686.3L781.3 405.6M86.8 668.4L512.1 1514.5M49.0 707.8L799.4 416.2M132.4 651.1L582.2 1452.4M59.0 730.3L818.2 427.0M176.3 634.5L647.5 1394.6M69.5 753.9L837.5 438.3M218.5 618.5L708.5 1340.6M80.4 778.5L857.5 449.9M259.3 603.1L765.6 1290.0M91.9 804.4L878.1 461.9M298.6 588.2L819.2 1242.6M104.0 831.7L899.5 474.3M336.6 573.9L869.6 1198.0M116.7 860.3L921.6 487.1M373.3 560.0L917.0 1156.0M130.1 890.4L944.4 500.3M408.7 546.6L961.8 1116.4M144.2 922.2L968.1 514.1M443.0 533.6L1004.1 1079.0M159.1 955.8L992.6 528.3M476.2 521.0L1044.1 1043.5M174.9 991.3L1018.0 543.1M508.4 508.9L1082.1 1010.0M191.6 1029.0L1044.4 558.4M539.5 497.1L1118.1 978.1M209.3 1068.9L1071.7 574.3M569.7 485.7L1152.3 947.8M228.2 1111.4L1100.2 590.8M598.9 474.6L1184.9 918.9M248.3 1156.7L1129.8 608.0M627.3 463.9L1215.9 891.5M269.7 1205.0L1160.6 625.9M654.8 453.4L1245.5 865.3M292.7 1256.8L1192.6 644.5M681.6 443.3L1273.8 840.2M317.3 1312.2L1226.1 663.9M707.6 433.5L1300.8 816.3M343.8 1371.9L1260.9 684.1M732.8 423.9L1326.7 793.4M372.3 1436.2L1297.3 705.3M757.4 414.6L1351.5 771.5M403.2 1505.7L1335.4 727.4M781.3 405.6L1375.2 750.5M436.7 1581.2L1375.2 750.5" stroke="#4a9fca" stroke-width="1.3" stroke-opacity="0.75" fill="none"/>
<clipPath id="planeclip"><polygon points="39.5,686.3 781.3,405.6 1375.2,750.5 436.7,1581.2"/></clipPath>
<polygon points="39.5,686.3 781.3,405.6 1375.2,750.5 436.7,1581.2" fill="none" stroke="#6cc0e6" stroke-width="14" stroke-opacity="0.3" clip-path="url(#planeclip)"/>
<polygon points="39.5,686.3 781.3,405.6 1375.2,750.5 436.7,1581.2" fill="none" stroke="#8fd0ec" stroke-width="2" stroke-opacity="0.8"/>
<g filter="url(#blur7)" opacity="0.62">
<polygon points="478.0,832.0 560.0,866.0 682.0,892.0 688.0,902.0 612.0,950.0 574.0,963.0 545.0,940.0 505.0,880.0" fill="#3f6b8f"/>
</g>
<g filter="url(#blur4)" opacity="0.6">
<polygon points="1038.0,674.0 1074.0,616.0 1105.0,632.0 1082.0,650.0 1056.0,668.0" fill="#3f6b8f"/>
</g>
<polygon points="441.7,617.5 464.2,603.3 503.3,592.5 600.0,547.7 986.5,384.0 1120.6,447.8 554.4,735.8" fill="#dc1c2c" stroke="#3f5f80" stroke-width="2.0" stroke-linejoin="round"/>
<polygon points="600.0,560.0 656.7,536.2 969.8,400.6 992.0,391.0 992.0,460.0 966.7,472.0 635.5,629.7 610.0,642.0" fill="#91121e" stroke="#3f5f80" stroke-width="2.0" stroke-linejoin="round"/>
<polygon points="1042.2,428.3 1087.8,450.2 1028.0,480.4 1020.0,474.0 1020.0,430.0" fill="#c11826" stroke="#3f5f80" stroke-width="2.0" stroke-linejoin="round"/>
<polyline points="1030.0,414.4 1115.6,451.1" fill="none" stroke="#3f5f80" stroke-width="3.2" stroke-linejoin="round" stroke-linecap="round"/>
<polyline points="1030.0,419.2 1091.0,446.2" fill="none" stroke="#3f5f80" stroke-width="1.8" stroke-linejoin="round" stroke-linecap="round"/>
<polyline points="577.9,705.8 1087.8,450.2" fill="none" stroke="#3f5f80" stroke-width="2.0" stroke-linejoin="round" stroke-linecap="round"/>
<polygon points="983.3,470.0 1003.8,470.0 1003.8,492.5 983.3,502.4" fill="#c61a28" stroke="#3f5f80" stroke-width="2.0" stroke-linejoin="round"/>
<polygon points="1005.4,470.0 1027.2,470.0 1027.2,480.8 1005.4,491.6" fill="#91121e" stroke="#3f5f80" stroke-width="2.0" stroke-linejoin="round"/>
<clipPath id="cylclip"><path d="M423.3 190 L516.2 648 L522 654 L577.9 705.8 L639.2 675 L575.8 180 Z"/></clipPath>
<g clip-path="url(#cylclip)">
<polygon points="414.1,150 437.2,150 547.4,720 530.4,720" fill="#d8741b"/>
<polygon points="436.2,150 456.0,150 561.1,720 546.4,720" fill="#ca6b19"/>
<polygon points="455.0,150 478.1,150 577.0,720 560.1,720" fill="#be6418"/>
<polygon points="477.1,150 500.1,150 593.0,720 576.0,720" fill="#b15d17"/>
<polygon points="499.1,150 523.7,150 610.1,720 592.0,720" fill="#a55716"/>
<polygon points="522.7,150 545.7,150 626.0,720 609.1,720" fill="#9b5215"/>
<polygon points="544.7,150 572.5,150 645.4,720 625.0,720" fill="#904d14"/>
</g>
<polyline points="423.3,192.5 516.2,648.0 522.0,654.0 577.9,705.8 639.2,675.0 624.4,560.0" fill="none" stroke="#3f5f80" stroke-width="2.0" stroke-linejoin="round" stroke-linecap="round"/>
<ellipse cx="497.6" cy="187" rx="74.6" ry="22.4" transform="rotate(-5.2 497.6 187)" fill="#ea8220" stroke="#3f5f80" stroke-width="2"/>
<polygon points="477.5,161.7 535.8,148.0 903.0,284.0 618.3,187.5 560.0,202.5 550.8,198.3 488.3,166.7" fill="#43b047" stroke="#3f5f80" stroke-width="2.0" stroke-linejoin="round"/>
<polygon points="535.8,148.0 903.0,284.0 618.3,187.5 560.0,160.0" fill="#3fa843"/>
<clipPath id="chordclip"><polygon points="488.3,166.7 550.8,198.3 600.0,215.0 600.0,150.0 500.0,150.0"/></clipPath>
<g clip-path="url(#chordclip)">
<ellipse cx="497.6" cy="187" rx="74.6" ry="22.4" transform="rotate(-5.2 497.6 187)" fill="#e4801f" stroke="#3f5f80" stroke-width="2"/>
<ellipse cx="497.6" cy="187" rx="73" ry="21.2" transform="rotate(-5.2 497.6 187)" fill="#000" filter="url(#zf)"/>
</g>
<polyline points="488.3,166.7 550.8,198.3" fill="none" stroke="#3f5f80" stroke-width="2.0" stroke-linejoin="round" stroke-linecap="round"/>
<polyline points="477.5,161.7 535.8,148.0 903.0,284.0" fill="none" stroke="#3f5f80" stroke-width="2.0" stroke-linejoin="round" stroke-linecap="round"/>
<polyline points="477.5,161.7 488.3,166.7" fill="none" stroke="#3f5f80" stroke-width="1.2" stroke-linejoin="round" stroke-linecap="round"/>
<polygon points="560.0,202.5 618.3,187.5 903.0,284.0 613.3,576.7 611.7,572.0" fill="#2d722e" stroke="#3f5f80" stroke-width="2.0" stroke-linejoin="round"/>
<polygon points="550.8,198.3 560.0,202.5 611.7,572.0 613.3,576.7 605.0,569.2" fill="#3c9c40" stroke="#3f5f80" stroke-width="2.0" stroke-linejoin="round"/>
<polygon points="441.7,617.5 446.5,636.0 438.0,670.0 438.5,694.0 451.7,741.7 555.0,862.0 548.0,835.0 545.3,808.0 550.0,785.0 557.0,760.0 554.4,735.8" fill="#dc1c2c" stroke="#3f5f80" stroke-width="2.0" stroke-linejoin="round"/>
<polygon points="441.7,617.5 554.4,735.8 557.0,760.0 447.0,640.0" fill="#c41928"/>
<polygon points="438.2,684.0 438.5,694.0 451.7,741.7 555.0,862.0 548.0,835.0 545.3,808.0" fill="#c51a28"/>
<polyline points="441.7,617.5 446.5,636.0 438.0,670.0 438.5,694.0 451.7,741.7 555.0,862.0" fill="none" stroke="#3f5f80" stroke-width="2.0" stroke-linejoin="round" stroke-linecap="round"/>
<polyline points="441.7,617.5 554.4,735.8" fill="none" stroke="#3f5f80" stroke-width="2.0" stroke-linejoin="round" stroke-linecap="round"/>
<polyline points="446.5,636.0 557.0,760.0" fill="none" stroke="#3f5f80" stroke-width="0.9" stroke-linejoin="round" stroke-linecap="round" stroke-opacity="0.5"/>
<polygon points="441.7,617.5 464.2,603.3 575.8,723.3 554.4,735.8" fill="#dc1c2c" stroke="#3f5f80" stroke-width="2.0" stroke-linejoin="round"/>
<polygon points="464.2,603.3 468.5,604.5 578.5,721.8 575.8,723.3" fill="#dc1c2c" stroke="#3f5f80" stroke-width="1.0" stroke-linejoin="round"/>
<polygon points="468.5,604.5 503.3,594.0 507.0,602.0 482.5,610.0 577.9,705.8 578.5,721.8" fill="#dc1c2c"/>
<polyline points="468.5,604.5 578.5,721.8" fill="none" stroke="#3f5f80" stroke-width="2.0" stroke-linejoin="round" stroke-linecap="round"/>
<polygon points="484.5,611.0 506.0,601.2 514.0,639.5" fill="#91121e" stroke="#3f5f80" stroke-width="2.0" stroke-linejoin="round"/>
<polyline points="484.5,611.0 577.9,705.8 579.0,704.5" fill="none" stroke="#3f5f80" stroke-width="2.0" stroke-linejoin="round" stroke-linecap="round"/>
<polygon points="554.4,735.8 1106.1,453.3 1120.6,447.8 1124.5,468.0 1127.2,492.2 1125.5,520.0 1119.5,541.1 1044.0,667.0 1043.7,677.4 687.3,901.7 679.0,890.2 562.3,872.5 555.0,862.0 548.0,835.0 545.3,808.0 550.0,785.0 557.0,760.0" fill="#91121e" stroke="#3f5f80" stroke-width="2.0" stroke-linejoin="round"/>
<polyline points="554.4,735.8 575.5,847.0 1108.0,541.0 1117.8,449.6" fill="none" stroke="#3f5f80" stroke-width="2.0" stroke-linejoin="round" stroke-linecap="round"/>
<polyline points="1108.0,541.0 1119.5,541.1" fill="none" stroke="#3f5f80" stroke-width="1.0" stroke-linejoin="round" stroke-linecap="round"/>
<polygon points="679.0,890.2 687.3,901.7 686.0,893.0" fill="#dc1c2c" stroke="#3f5f80" stroke-width="0.8" stroke-linejoin="round"/>
<g transform="rotate(6 1002 434.4)">
<ellipse cx="1002" cy="434.4" rx="39" ry="45" fill="#c06a10" stroke="#3f5f80" stroke-width="2.6"/>
<ellipse cx="998.6" cy="434.79999999999995" rx="35" ry="43.6" fill="#e27b19" stroke="#8a5a2a" stroke-width="1.2"/>
</g>
<g transform="rotate(22 1006.8 405.4)"><ellipse cx="1006.8" cy="405.4" rx="15" ry="7.8" fill="#b5650f" stroke="#3f5f80" stroke-width="2.6"/><ellipse cx="1008.6" cy="407.0" rx="9.0" ry="5.1" fill="#4a6586" stroke="#3f5f80" stroke-width="1"/></g>
<polyline points="1001.0,401.5 1017.0,409.5" fill="none" stroke="#d8202e" stroke-width="1.2" stroke-linejoin="round" stroke-linecap="round"/>
<g transform="rotate(14 976.2 423.4)"><ellipse cx="976.2" cy="423.4" rx="7.4" ry="18.2" fill="#b5650f" stroke="#3f5f80" stroke-width="2.6"/><ellipse cx="978.4" cy="425.2" rx="4.4" ry="12.0" fill="#4a6586" stroke="#3f5f80" stroke-width="1"/></g>
<g transform="rotate(16 1021.2 446.2)"><ellipse cx="1021.2" cy="446.2" rx="7.6" ry="19.2" fill="#b5650f" stroke="#3f5f80" stroke-width="2.6"/><ellipse cx="1023.5" cy="447.7" rx="4.6" ry="12.7" fill="#a51522" stroke="#3f5f80" stroke-width="1"/></g>
<g transform="rotate(27 987 463.2)"><ellipse cx="987" cy="463.2" rx="14.6" ry="9" fill="#b5650f" stroke="#3f5f80" stroke-width="2.6"/><ellipse cx="989.6" cy="464.8" rx="8.8" ry="5.9" fill="#d51d2c" stroke="#3f5f80" stroke-width="1"/></g>
<circle cx="998.3" cy="434.8" r="6.6" fill="#d91d2c" stroke="#3f5f80" stroke-width="2.4"/>
<polyline points="993.5,431.4 1003.0,438.4" fill="none" stroke="#3f5f80" stroke-width="1.2" stroke-linejoin="round" stroke-linecap="round"/>
</svg>
<div class="abs" style="left:1748.7px;top:827.3px;width:160px;height:35px;background:#fff;border:1px solid #dde2ea;border-radius:5px"></div>
<div class="t" style="left:1775.0px;top:834px;font-size:19px;color:#7b8a9b;transform:scaleX(1.1000);">Nastavení</div>
<div class="abs" style="left:1777.6px;top:880.3px;width:160px;height:36px;background:#fff;border:1px solid #dde2ea;border-radius:5px"></div>
</div>
<div class="abs" style="left:1898px;top:92px;width:19px;height:887px;background:#f0f0f0"></div>
<div class="abs" style="left:1898px;top:367px;width:19px;height:522px;background:#cdcdcd"></div>
<svg class="abs" style="left:1898px;top:92px" width="19" height="887" viewBox="0 0 19 887" fill="none" stroke="#4a4a4a" stroke-width="2"><path d="M5.6 12.4L9.5 8.5L13.4 12.4"/><path d="M5.6 872.6L9.5 876.5L13.4 872.6"/></svg>
<div class="abs" style="left:3px;top:979px;width:1915px;height:20px;background:#f0f0f0"></div>
<div class="abs" style="left:150px;top:980px;width:1380px;height:18px;background:#cdcdcd"></div>
<svg class="abs" style="left:2px;top:979px" width="1896" height="20" viewBox="2 979 1896 20" fill="none" stroke="#4a4a4a" stroke-width="2"><path d="M13.4 984.6L9.5 988.5L13.4 992.4"/><path d="M1883.6 984.6L1887.5 988.5L1883.6 992.4"/></svg>
<div id="status" class="abs"></div>
<div class="sep" style="left:151px"></div>
<div class="sep" style="left:202px"></div>
<div class="sep" style="left:255px"></div>
<div class="sep" style="left:401px"></div>
<div class="sep" style="left:552px"></div>
<div class="t" style="left:2.2px;top:1009.7px;font-size:14.6px;color:#000;letter-spacing:-0.321px;">1920 x 1080 x 24 BPP</div>
<div class="t" style="left:155.39999999999998px;top:1009.7px;font-size:14.6px;color:#000;letter-spacing:0.291px;">21/21</div>
<div class="t" style="left:207.1px;top:1009.7px;font-size:14.6px;color:#000;letter-spacing:-0.299px;">133 %</div>
<div class="t" style="left:259.59999999999997px;top:1009.7px;font-size:14.6px;color:#000;letter-spacing:-0.152px;">814.14 KB / 5.93 MB</div>
<div class="t" style="left:405.2px;top:1009.7px;font-size:14.6px;color:#000;letter-spacing:-0.159px;">05.02.2024 / 14:25:20</div>
<div id="taskbar" class="abs"></div>
<div class="abs" style="left:814px;top:1030px;width:61px;height:47px;background:#f1f4f9"></div>
<div class="ul" style="left:571px;width:51px"></div>
<div class="ul" style="left:695px;width:51px"></div>
<div class="ul" style="left:757px;width:51px"></div>
<div class="ul" style="left:814px;width:61px"></div>
<div class="abs" style="left:60px;top:1030px;width:360px;height:50px;background:#fff;border:1px solid #b4b4b4;border-right-color:#d8d8d8"></div>
<div class="abs" style="left:1914px;top:1030px;width:1px;height:50px;background:#a3abb8"></div>
<svg class="abs" style="left:0;top:1030px" width="1920" height="50" viewBox="0 1030 1920 50">
<defs>
<linearGradient id="gedge1" x1="0" y1="0" x2="1" y2="1"><stop offset="0" stop-color="#2fb6e8"/><stop offset="1" stop-color="#0c59b4"/></linearGradient>
<linearGradient id="gedge2" x1="0" y1="0" x2="1" y2="0.6"><stop offset="0" stop-color="#2dc2e0"/><stop offset="1" stop-color="#6fdc4c"/></linearGradient>
<linearGradient id="gsq" x1="0" y1="0" x2="0" y2="1"><stop offset="0" stop-color="#ffffff"/><stop offset="1" stop-color="#d9d9d9"/></linearGradient>
<linearGradient id="gcoin" x1="0" y1="0" x2="0" y2="1"><stop offset="0" stop-color="#ffb638"/><stop offset="1" stop-color="#f08a12"/></linearGradient>
<linearGradient id="gwing" x1="0" y1="0" x2="0.3" y2="1"><stop offset="0" stop-color="#ffd23a"/><stop offset="1" stop-color="#f08a0c"/></linearGradient>
<linearGradient id="gleaf" x1="0" y1="0" x2="1" y2="0"><stop offset="0" stop-color="#8db64a"/><stop offset="1" stop-color="#1f8a5a"/></linearGradient>
</defs>
<path d="M19.8 1047.4L28.6 1046.2V1054.4H19.8Z M29.6 1046L40.2 1044.6V1054.4H29.6Z M19.8 1055.4H28.6V1063.8L19.8 1062.6Z M29.6 1055.4H40.2V1065.2L29.6 1063.9Z" fill="#000"/>
<circle cx="88.1" cy="1051.9" r="6.3" fill="none" stroke="#111" stroke-width="1.5"/><path d="M83.6 1056.4L75.2 1064.6" stroke="#111" stroke-width="1.6" stroke-linecap="round"/>
<path d="M356.2 1031Q355.4 1040 357.4 1046L364.4 1044Q365 1038 364 1031Z" fill="#8cb44c"/>
<path d="M363.6 1031Q367.6 1040 368.4 1048Q369 1062 367.8 1079.4Q366.6 1077 366 1073Q367 1060 364.6 1049Q362 1040 359 1031Z" fill="#7fae48"/>
<path d="M366 1031Q372 1040 373.6 1046Q374.6 1056 372.4 1064Q370 1073 367.8 1079.4Q369.6 1062 368.8 1050Q367.6 1040 363.6 1031Z" fill="#1f8f66"/>
<path d="M377.2 1031Q377.4 1040 379.4 1046Q381.6 1054 381.4 1062.6Q383.6 1054 383.4 1046Q383 1038 385.8 1031Z" fill="#86b44a"/>
<path d="M380.6 1031Q380.4 1040 381.8 1046Q382.8 1054 381.4 1062.6Q384.6 1054 384 1046Q383.4 1038 386.4 1031Z" fill="#2f9a5c"/>
<path d="M336.6 1043.6Q340 1040.2 348 1041.4Q362 1042.4 371.6 1043.6Q374.6 1046 374.2 1054Q374.6 1064 371.4 1069.6Q366 1072.6 358 1070.4Q352.6 1068.6 351.6 1064.8Q345 1067 337.6 1065.4Q332.4 1063 333.4 1059.4Q338 1053.6 346.6 1050.6Q339 1049.4 336.6 1043.6Z" fill="#3a1a14"/>
<path d="M341 1044.4L349 1044L347.6 1048.8Q343 1048.6 341 1044.4Z M352 1044.6L366 1045.2L354 1049.6Z M358 1051.6L369.4 1046.6L366.4 1055.8Z M371.4 1049L372.4 1065L368.6 1066Z M356.4 1053.6L364 1056.6L357.6 1064.6L353 1060Z M366 1058.6L367 1067.6L360.4 1067.6Z M339.4 1059L349.4 1053L348.4 1062Q343 1064 339.4 1059Z" fill="url(#gwing)"/>
<g fill="#fff"><circle cx="350.6" cy="1046.6" r="1.1"/><circle cx="351.6" cy="1050.6" r="1.2"/><circle cx="350.2" cy="1056.6" r="1.4"/><circle cx="350.8" cy="1061.6" r="1.3"/><circle cx="353.6" cy="1066.4" r="1.3"/><circle cx="358" cy="1068.6" r="1.2"/><circle cx="362.6" cy="1069.6" r="1.1"/><circle cx="367" cy="1069.4" r="1.1"/><circle cx="338.4" cy="1043.6" r="0.9"/><circle cx="341.6" cy="1042.4" r="0.9"/><circle cx="345" cy="1042" r="0.9"/><circle cx="335.6" cy="1061.2" r="1"/><circle cx="337.8" cy="1063.8" r="1"/><circle cx="341.6" cy="1065.2" r="1"/></g>
<path d="M382.4 1036.4Q392 1036.4 400 1041Q406 1044.6 406.6 1047.4Q404 1049.4 398.6 1048.6Q396 1052.6 390.6 1052.8Q385.6 1051.6 384.6 1047Q382.4 1042 382.4 1036.4Z" fill="#3a1a14"/>
<path d="M384.2 1038L388 1038.6L388.4 1048Q385.4 1044 384.2 1038Z M389.6 1039L393.6 1040.4L391 1049.6Z M395 1041.4L398.4 1043.4L393.6 1049.6Z M399.6 1044.4L404.4 1046.8L398 1047.4Z" fill="url(#gwing)"/>
<g fill="#fff"><circle cx="387.4" cy="1050.6" r="0.9"/><circle cx="390.6" cy="1051.4" r="0.9"/><circle cx="394" cy="1050.6" r="0.9"/><circle cx="396.6" cy="1048.6" r="0.8"/><circle cx="399.4" cy="1042.4" r="0.7"/><circle cx="402.4" cy="1044.4" r="0.7"/></g>
<g fill="none" stroke="#111" stroke-width="1.2"><rect x="441.2" y="1050.8" width="11.6" height="7.4"/><path d="M440.2 1045.2V1047.9H453.4V1045.2M440.2 1063.8V1061.1H453.4V1063.8M458.7 1045.4V1050M458.7 1055V1063.4"/></g><rect x="457.3" y="1051" width="2.9" height="2.9" fill="#111"/>
<path d="M486.2 1041.8V1068M490 1041.8V1068" stroke="#111" stroke-width="1.2"/>
<circle cx="533.9" cy="1055" r="15" fill="url(#gedge1)"/>
<path d="M519.2 1052Q520.5 1041 533 1040Q546 1040 548.9 1052.5Q549.2 1060.5 541.5 1060.6Q535.6 1060.2 536.6 1056.8Q538.4 1053 535 1050.6Q530 1048.6 526 1052.6Q521 1058 524.6 1066Q517.6 1060.6 519.2 1052Z" fill="url(#gedge2)"/>
<path d="M526 1052.6Q523.6 1060 529 1066Q536 1071.6 545 1064.6Q547 1062 546 1061.4Q540 1064.6 535.4 1062Q530.6 1058.6 532.6 1053Q533.4 1051.2 535 1050.6Q530 1048.6 526 1052.6Z" fill="#1653a6"/>
<path d="M595.8 1055L582.81 1047.50A15 15 0 0 1 608.79 1047.50Z" fill="#e53f30"/>
<path d="M595.8 1055L608.79 1047.50A15 15 0 0 1 595.80 1070.00Z" fill="#fbc116"/>
<path d="M595.8 1055L595.80 1070.00A15 15 0 0 1 582.81 1047.50Z" fill="#2c9c4a"/>
<path d="M608.79 1047.50L602.55 1051.10L595.80 1047.20L589.05 1051.10L582.81 1047.50" fill="#e53f30"/>
<path d="M602.55 1051.10L608.79 1047.50L609.90 1060.13L602.55 1058.90Z" fill="#e53f30" opacity="0"/>
<path d="M595.80 1070.00L600.44 1069.27L602.55 1058.90L595.80 1062.80Z" fill="#fbc116"/>
<path d="M582.81 1047.50L581.13 1051.88L589.05 1058.90L589.05 1051.10Z" fill="#2c9c4a"/>
<circle cx="595.8" cy="1055" r="7.8" fill="#fff"/><circle cx="595.8" cy="1055" r="6" fill="#3f82f0"/>
<rect x="643.6" y="1040.5" width="29" height="29" rx="3" fill="url(#gsq)" stroke="#9a9a9a" stroke-width="0.9"/>
<path d="M652.6 1044.4H663.6L670 1051.8V1053.2H646.2V1051.8Z M646.2 1056.8H670V1058.2L663.6 1065.6H652.6L646.2 1058.2Z" fill="#0a0a0a"/>
<rect x="652.4" y="1049.4" width="11.4" height="11.2" fill="#fff"/><rect x="655" y="1052" width="6.2" height="6.2" fill="#e8220c"/><path d="M646.2 1054.4H652.4V1055.6H646.2Z M663.8 1054.4H670V1055.6H663.8Z" fill="#0a0a0a"/>
<circle cx="719.9" cy="1055" r="15" fill="#fff"/>
<path d="M726.9 1045.8A8.6 8.6 0 0 0 714.6 1058.6Z" fill="#333"/><path d="M712.9 1062.6A8.6 8.6 0 0 0 726.4 1050.4Z" fill="#ec6a23"/>
<path d="M768.2 1044.4Q768.2 1043 769.6 1043H779Q780.4 1043 781 1044.2L781.6 1046.4H768.2Z" fill="#e6a50e"/>
<rect x="768.2" y="1045" width="27" height="19.4" rx="1" fill="#fdd565"/><path d="M773.2 1066V1056.6Q773.2 1055 774.8 1055H789Q790.6 1055 790.6 1056.6V1066H786.8V1059H777V1066Z" fill="#3592e0"/>
<path d="M830.0 1044.7C830.8 1044.1 834.7 1043.3 835.9 1042.5C837.1 1041.8 836.8 1040.3 837.2 1040.3C837.7 1040.3 838.0 1041.8 838.5 1042.5C839.1 1043.3 840.1 1043.9 840.6 1044.7C841.0 1045.6 841.1 1047.9 841.5 1047.7C841.9 1047.5 842.5 1044.7 843.0 1043.6C843.4 1042.5 843.6 1041.7 844.1 1041.2C844.6 1040.8 845.2 1040.7 845.9 1040.9C846.6 1041.0 847.7 1041.3 848.1 1042.0C848.6 1042.6 848.8 1043.6 848.7 1044.7C848.6 1045.9 847.7 1047.7 847.4 1048.8C847.1 1049.9 846.7 1050.9 847.0 1051.4C847.4 1052.0 848.6 1052.0 849.6 1052.1C850.7 1052.3 852.3 1052.1 853.3 1052.1C854.3 1052.2 854.8 1052.0 855.6 1052.3C856.4 1052.6 857.6 1053.4 858.1 1054.0C858.7 1054.6 858.9 1055.5 858.7 1056.2C858.5 1056.9 857.7 1057.8 857.0 1058.1C856.3 1058.4 855.2 1057.8 854.4 1058.1C853.7 1058.3 853.0 1059.0 852.6 1059.6C852.2 1060.1 852.1 1060.9 852.2 1061.4C852.3 1062.0 852.8 1062.8 853.3 1062.9C853.8 1063.0 854.6 1062.2 855.2 1062.1C855.8 1062.1 856.5 1062.3 857.0 1062.5C857.5 1062.8 858.1 1063.2 858.1 1063.6C858.2 1064.1 858.0 1064.8 857.4 1065.1C856.9 1065.4 855.7 1065.5 854.8 1065.5C854.0 1065.4 852.9 1065.1 852.2 1064.7C851.5 1064.4 851.2 1063.3 850.7 1063.3C850.3 1063.3 850.1 1064.2 849.6 1064.7C849.2 1065.3 848.6 1066.0 848.1 1066.6C847.7 1067.2 847.3 1068.0 846.7 1068.4C846.0 1068.9 845.1 1069.6 844.1 1069.6C843.1 1069.5 841.5 1068.6 840.7 1068.1C839.9 1067.5 839.3 1067.0 839.3 1066.2C839.2 1065.5 840.1 1064.6 840.4 1063.6C840.6 1062.7 840.9 1061.4 840.7 1060.7C840.6 1059.9 839.9 1059.6 839.3 1059.2C838.6 1058.8 837.8 1058.6 836.7 1058.4C835.5 1058.3 833.4 1058.3 832.2 1058.1C831.0 1057.8 830.2 1057.5 829.6 1057.0C829.1 1056.4 829.0 1055.5 829.1 1054.7C829.1 1054.0 829.4 1053.0 830.0 1052.5C830.6 1052.1 831.6 1052.1 832.6 1052.1C833.6 1052.2 835.2 1053.0 835.9 1052.9C836.7 1052.8 837.5 1051.8 837.0 1051.4C836.6 1051.0 834.2 1051.2 833.3 1050.7C832.5 1050.1 832.2 1048.8 831.9 1048.1C831.5 1047.3 831.4 1046.8 831.1 1046.2C830.8 1045.7 829.2 1045.4 830.0 1044.7Z" fill="#a40e0e"/>
<path d="M832.8 1045.8L838 1043.6L840.2 1046.6L838.4 1050.2Q834.2 1050.4 832.8 1045.8Z" fill="#cf6a6a"/><ellipse cx="836.4" cy="1044.8" rx="1.3" ry="0.9" fill="#f4f4f4"/><ellipse cx="834.4" cy="1046.8" rx="1" ry="0.8" fill="#f4f4f4"/><path d="M833.4 1052L836 1052.8" stroke="#eee" stroke-width="0.8"/>
<text x="840.4" y="1059.8" font-family="Liberation Serif,serif" font-size="9.4" font-weight="bold" fill="#f6e04a" textLength="7.6" lengthAdjust="spacingAndGlyphs">64</text>
<circle cx="1323.1" cy="1056.2" r="12.4" fill="#fff"/><circle cx="1323.1" cy="1056.2" r="10.8" fill="#1190dc"/>
<path d="M1318.8 1052.4Q1319 1048.4 1323.2 1048.4Q1327.4 1048.6 1327.4 1052.2Q1327.4 1054.4 1325 1056Q1323.4 1057.2 1323.4 1059.4" fill="none" stroke="#fff" stroke-width="2.6"/><circle cx="1323.4" cy="1063.2" r="1.6" fill="#fff"/>
<circle cx="1333.1" cy="1062.4" r="6.2" fill="#fff" opacity="0.7"/><circle cx="1333.1" cy="1062.4" r="5.4" fill="#f3aa1c"/><rect x="1332.4" y="1061.4" width="1.5" height="4.2" fill="#fff"/><circle cx="1333.15" cy="1059.6" r="0.9" fill="#fff"/>
<ellipse cx="1409.6" cy="1056.6" rx="11.6" ry="4.4" fill="url(#gcoin)"/><rect x="1398" y="1054" width="23.2" height="2.6" fill="#f6961c"/><ellipse cx="1409.6" cy="1054" rx="11.6" ry="4.2" fill="#ffb43a"/>
<ellipse cx="1414" cy="1051" rx="11.8" ry="4.4" fill="url(#gcoin)"/><rect x="1402.2" y="1048.6" width="23.6" height="2.4" fill="#f6961c"/><ellipse cx="1414" cy="1048.6" rx="11.8" ry="4.2" fill="#ffb43a"/>
<ellipse cx="1409.6" cy="1046" rx="11.6" ry="4.2" fill="url(#gcoin)"/><rect x="1398" y="1043.6" width="23.2" height="2.4" fill="#f6961c"/><ellipse cx="1409.6" cy="1043.6" rx="11.6" ry="4" fill="#ffb840"/>
<path d="M1407 1068.4L1411.8 1063.8L1416.6 1068.4" fill="none" stroke="#5cb81c" stroke-width="2.4" stroke-linejoin="miter"/>
<path d="M1610.4 1059.2L1618.2 1051.2L1626 1059.2" fill="none" stroke="#111" stroke-width="1.4"/>
<g fill="none" stroke="#111" stroke-width="1.2"><rect x="1642" y="1050.9" width="9.8" height="8.6" rx="1.6"/><path d="M1651.8 1054.2L1655.6 1051.6V1058.8L1651.8 1056.2"/><path d="M1643.6 1048.4Q1647.6 1045 1652 1048.2M1643.6 1062Q1647.6 1065.4 1652 1062.2"/></g>
<g fill="none" stroke="#111" stroke-width="1.3"><path d="M1671.4 1062.6A13.4 13.4 0 0 1 1686.4 1048.8"/><path d="M1675.6 1062.6A9.4 9.4 0 0 1 1686.4 1053.2" /><path d="M1679.8 1062.6A5.4 5.4 0 0 1 1686.4 1057.6"/></g><circle cx="1684.8" cy="1061.4" r="1.5" fill="#111"/>
<rect x="1702" y="1050.4" width="14.6" height="10" fill="#0a0a0a"/><rect x="1716.6" y="1053.4" width="1.6" height="4" fill="#0a0a0a"/><path d="M1699.4 1048.4V1051M1701.8 1048.4V1051M1698.4 1051H1702.8V1053.4Q1702.8 1055 1700.6 1055Q1698.4 1055 1698.4 1053.4ZM1700.6 1055V1060.4H1702.4" fill="none" stroke="#0a0a0a" stroke-width="1"/>
<path d="M1869.4 1045H1889V1061.6H1882L1879.2 1064.4L1876.4 1061.6H1869.4Z" fill="#0a0a0a"/><path d="M1873.4 1049.6H1885M1873.4 1053.2H1885M1873.4 1056.8H1881.4" stroke="#fff" stroke-width="1.1"/>
</svg>
<div class="t" style="left:109.8px;top:1047px;font-size:18px;color:#1a1a1a;transform:scaleX(1.0724);">Hledat</div>
<div class="t" style="left:1436.7px;top:1047px;font-size:18px;color:#111;transform:scaleX(0.9075);">EUR/CZK</div>
<div class="t" style="left:1519.8px;top:1047px;font-size:18px;color:#1e8a2e;letter-spacing:-0.430px;">+0,50%</div>
<div class="t" style="left:1732.5px;top:1048.6px;font-size:14.2px;color:#111;transform:scaleX(0.8597);">CES</div>
<div class="t" style="left:1793.9px;top:1036.6px;font-size:14px;color:#111;letter-spacing:-0.209px;">14:28</div>
<div class="t" style="left:1775.9px;top:1059.6px;font-size:14px;color:#111;letter-spacing:-0.008px;">05.02.2024</div>
</body></html>
